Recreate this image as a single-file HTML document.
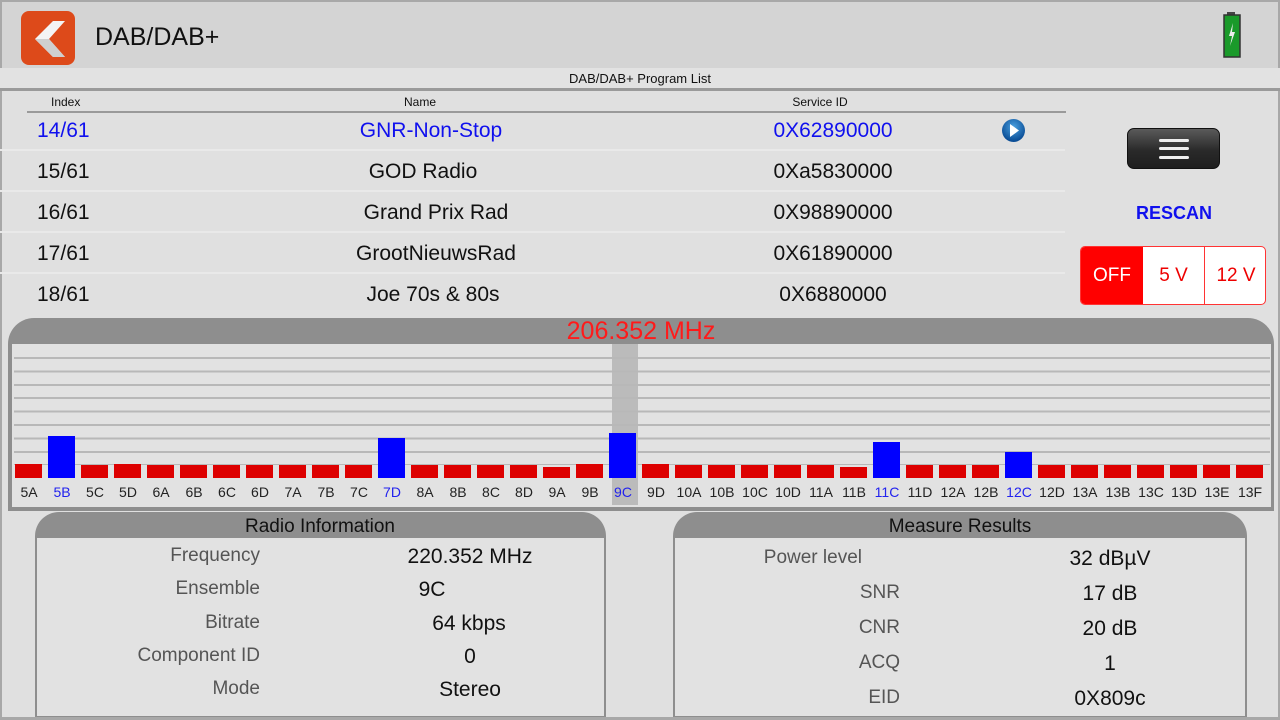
<!DOCTYPE html>
<html><head><meta charset="utf-8"><style>
*{margin:0;padding:0;box-sizing:border-box}
body{width:1280px;height:720px;overflow:hidden;background:#e0e0e0;font-family:"Liberation Sans",sans-serif;position:relative;color:#111}
.a{position:absolute;white-space:nowrap}
.c{transform:translateX(-50%)}
.row{position:absolute;left:0;width:1065px;height:41px;border-bottom:2px solid #e9e9e9;font-size:21px}
.row span{position:absolute;top:9px}
.lbl{position:absolute;text-align:right;color:#555;font-size:19px}
.val{position:absolute;font-size:21px;color:#111;transform:translateX(-50%)}
.slot{width:33px;position:relative;height:100%}
.bar{position:absolute;left:1px;width:27px;bottom:27px;background:#dd0000}
.bar.b{background:#0000ff}
.lab{position:absolute;left:15px;transform:translateX(-50%);bottom:5px;font-size:14px;color:#222}
.lab.b{color:#2222ee}
</style></head><body>
<div class="a" style="left:0;top:0;width:1280px;height:68px;background:#d4d4d4;border-top:2px solid #a8a8a8"></div>
<div class="a" style="left:0;top:0;width:2px;height:720px;background:#a8a8a8"></div>
<div class="a" style="left:1278px;top:0;width:2px;height:720px;background:#a8a8a8"></div>
<div class="a" style="left:21px;top:11px;width:54px;height:54px;background:#dd4a1a;border-radius:8px"></div>
<svg class="a" style="left:21px;top:11px" width="54" height="54"><path d="M32 10 L44 10 L28 28 L44 46 L32 46 L14 28 Z" fill="#f4f4f4"/><path d="M14 28 L28 28 L44 46 L32 46 Z" fill="#cfcfcf"/></svg>
<div class="a" style="left:95px;top:23px;font-size:25px;color:#111">DAB/DAB+</div>
<svg class="a" style="left:1222px;top:11px" width="22" height="48"><rect x="5" y="1" width="8" height="4" fill="#444"/><rect x="2" y="4" width="16" height="42" fill="#1a9a2a" stroke="#333" stroke-width="1.5"/><path d="M11 12 L7 25 L10 25 L8 35 L13 21 L10 21 Z" fill="#eee"/></svg>
<div class="a" style="left:0;top:68px;width:1280px;height:20px;background:#e2e2e2"></div>
<div class="a c" style="left:640px;top:71px;font-size:13px">DAB/DAB+ Program List</div>
<div class="a" style="left:0;top:88px;width:1280px;height:3px;background:#9a9a9a"></div>
<div class="a" style="left:51px;top:95px;font-size:12px">Index</div>
<div class="a c" style="left:420px;top:95px;font-size:12px">Name</div>
<div class="a c" style="left:820px;top:95px;font-size:12px">Service ID</div>
<div class="a" style="left:27px;top:111px;width:1039px;height:2px;background:#9a9a9a"></div>
<div class="row" style="top:110px;color:#1010ee"><span style="left:37px">14/61</span><span class="c" style="left:431px">GNR-Non-Stop</span><span class="c" style="left:833px">0X62890000</span></div>
<div class="row" style="top:151px"><span style="left:37px">15/61</span><span class="c" style="left:423px">GOD Radio</span><span class="c" style="left:833px">0Xa5830000</span></div>
<div class="row" style="top:192px"><span style="left:37px">16/61</span><span class="c" style="left:436px">Grand Prix Rad</span><span class="c" style="left:833px">0X98890000</span></div>
<div class="row" style="top:233px"><span style="left:37px">17/61</span><span class="c" style="left:436px">GrootNieuwsRad</span><span class="c" style="left:833px">0X61890000</span></div>
<div class="row" style="top:274px;border:none"><span style="left:37px">18/61</span><span class="c" style="left:433px">Joe 70s &amp; 80s</span><span class="c" style="left:833px">0X6880000</span></div>
<svg class="a" style="left:1001px;top:118px" width="25" height="25"><defs><radialGradient id="g" cx="50%" cy="35%" r="60%"><stop offset="0" stop-color="#4aa0e0"/><stop offset="1" stop-color="#0b4e96"/></radialGradient></defs><circle cx="12.5" cy="12.5" r="11.5" fill="url(#g)"/><path d="M9 6 L18 12.5 L9 19 Z" fill="#fff"/></svg>
<div class="a" style="left:1127px;top:128px;width:93px;height:41px;border-radius:7px;background:linear-gradient(#5a5a5a,#2a2a2a 55%,#1e1e1e);border:1px solid #111"></div>
<div class="a" style="left:1159px;top:139px;width:30px;height:3px;background:#eee;border-radius:2px"></div>
<div class="a" style="left:1159px;top:147px;width:30px;height:3px;background:#eee;border-radius:2px"></div>
<div class="a" style="left:1159px;top:156px;width:30px;height:3px;background:#eee;border-radius:2px"></div>
<div class="a c" style="left:1174px;top:203px;font-size:18px;font-weight:bold;color:#1010ee">RESCAN</div>
<div class="a" style="left:1080px;top:246px;width:186px;height:59px;border:1.5px solid #f33;border-radius:5px;background:#fff;overflow:hidden;font-size:19px;color:#e00">
<div class="a" style="left:0;top:0;width:62px;height:59px;background:#ff0000;color:#fff;text-align:center;line-height:57px">OFF</div>
<div class="a" style="left:62px;top:0;width:62px;height:59px;text-align:center;line-height:57px;border-right:1.5px solid #f33">5 V</div>
<div class="a" style="left:124px;top:0;width:62px;height:59px;text-align:center;line-height:57px">12 V</div></div>
<!-- chart -->
<div class="a" style="left:8px;top:318px;width:1266px;height:193px;background:#8e8e8e;border-radius:26px 26px 0 0"></div>
<div class="a" style="left:12px;top:344px;width:1259px;height:163px;background:#e2e2e2"></div>
<div class="a c" style="left:641px;top:317px;font-size:25px;color:#ff1a1a">206.352 MHz</div>
<div class="a" style="left:612px;top:344px;width:26px;height:161px;background:#bbbbbb"></div>
<div class="a" style="left:14px;top:357px;width:1256px;height:108px;background:repeating-linear-gradient(#b8b8b8 0 2px,transparent 2px 13.4px)"></div>
<div class="a" style="left:14px;top:344px;width:1254px;height:161px;display:flex">
<div class="slot"><div class="bar" style="height:14px"></div><div class="lab">5A</div></div>
<div class="slot"><div class="bar b" style="height:42px"></div><div class="lab b">5B</div></div>
<div class="slot"><div class="bar" style="height:13px"></div><div class="lab">5C</div></div>
<div class="slot"><div class="bar" style="height:14px"></div><div class="lab">5D</div></div>
<div class="slot"><div class="bar" style="height:13px"></div><div class="lab">6A</div></div>
<div class="slot"><div class="bar" style="height:13px"></div><div class="lab">6B</div></div>
<div class="slot"><div class="bar" style="height:13px"></div><div class="lab">6C</div></div>
<div class="slot"><div class="bar" style="height:13px"></div><div class="lab">6D</div></div>
<div class="slot"><div class="bar" style="height:13px"></div><div class="lab">7A</div></div>
<div class="slot"><div class="bar" style="height:13px"></div><div class="lab">7B</div></div>
<div class="slot"><div class="bar" style="height:13px"></div><div class="lab">7C</div></div>
<div class="slot"><div class="bar b" style="height:40px"></div><div class="lab b">7D</div></div>
<div class="slot"><div class="bar" style="height:13px"></div><div class="lab">8A</div></div>
<div class="slot"><div class="bar" style="height:13px"></div><div class="lab">8B</div></div>
<div class="slot"><div class="bar" style="height:13px"></div><div class="lab">8C</div></div>
<div class="slot"><div class="bar" style="height:13px"></div><div class="lab">8D</div></div>
<div class="slot"><div class="bar" style="height:11px"></div><div class="lab">9A</div></div>
<div class="slot"><div class="bar" style="height:14px"></div><div class="lab">9B</div></div>
<div class="slot"><div class="bar b" style="height:45px"></div><div class="lab b">9C</div></div>
<div class="slot"><div class="bar" style="height:14px"></div><div class="lab">9D</div></div>
<div class="slot"><div class="bar" style="height:13px"></div><div class="lab">10A</div></div>
<div class="slot"><div class="bar" style="height:13px"></div><div class="lab">10B</div></div>
<div class="slot"><div class="bar" style="height:13px"></div><div class="lab">10C</div></div>
<div class="slot"><div class="bar" style="height:13px"></div><div class="lab">10D</div></div>
<div class="slot"><div class="bar" style="height:13px"></div><div class="lab">11A</div></div>
<div class="slot"><div class="bar" style="height:11px"></div><div class="lab">11B</div></div>
<div class="slot"><div class="bar b" style="height:36px"></div><div class="lab b">11C</div></div>
<div class="slot"><div class="bar" style="height:13px"></div><div class="lab">11D</div></div>
<div class="slot"><div class="bar" style="height:13px"></div><div class="lab">12A</div></div>
<div class="slot"><div class="bar" style="height:13px"></div><div class="lab">12B</div></div>
<div class="slot"><div class="bar b" style="height:26px"></div><div class="lab b">12C</div></div>
<div class="slot"><div class="bar" style="height:13px"></div><div class="lab">12D</div></div>
<div class="slot"><div class="bar" style="height:13px"></div><div class="lab">13A</div></div>
<div class="slot"><div class="bar" style="height:13px"></div><div class="lab">13B</div></div>
<div class="slot"><div class="bar" style="height:13px"></div><div class="lab">13C</div></div>
<div class="slot"><div class="bar" style="height:13px"></div><div class="lab">13D</div></div>
<div class="slot"><div class="bar" style="height:13px"></div><div class="lab">13E</div></div>
<div class="slot"><div class="bar" style="height:13px"></div><div class="lab">13F</div></div>
</div>
<!-- radio info -->
<div class="a" style="left:35px;top:512px;width:571px;height:206px;background:#8e8e8e;border-radius:24px 24px 0 0"></div>
<div class="a" style="left:37px;top:538px;width:567px;height:178px;background:#e2e2e2"></div>
<div class="a c" style="left:320px;top:516px;font-size:19px">Radio Information</div>
<div class="lbl" style="left:60px;width:200px;top:545px">Frequency</div>
<div class="lbl" style="left:60px;width:200px;top:578px">Ensemble</div>
<div class="lbl" style="left:60px;width:200px;top:612px">Bitrate</div>
<div class="lbl" style="left:60px;width:200px;top:645px">Component ID</div>
<div class="lbl" style="left:60px;width:200px;top:678px">Mode</div>
<div class="val" style="left:470px;top:545px">220.352 MHz</div>
<div class="val" style="left:432px;top:578px">9C</div>
<div class="val" style="left:469px;top:612px">64 kbps</div>
<div class="val" style="left:470px;top:645px">0</div>
<div class="val" style="left:470px;top:678px">Stereo</div>
<!-- measure -->
<div class="a" style="left:673px;top:512px;width:574px;height:206px;background:#8e8e8e;border-radius:24px 24px 0 0"></div>
<div class="a" style="left:675px;top:538px;width:570px;height:178px;background:#e2e2e2"></div>
<div class="a c" style="left:960px;top:516px;font-size:19px">Measure Results</div>
<div class="lbl" style="left:662px;width:200px;top:547px">Power level</div>
<div class="lbl" style="left:662px;width:238px;top:582px">SNR</div>
<div class="lbl" style="left:662px;width:238px;top:617px">CNR</div>
<div class="lbl" style="left:662px;width:238px;top:652px">ACQ</div>
<div class="lbl" style="left:662px;width:238px;top:687px">EID</div>
<div class="val" style="left:1110px;top:547px">32 dBµV</div>
<div class="val" style="left:1110px;top:582px">17 dB</div>
<div class="val" style="left:1110px;top:617px">20 dB</div>
<div class="val" style="left:1110px;top:652px">1</div>
<div class="val" style="left:1110px;top:687px">0X809c</div>
<div class="a" style="left:0;top:717px;width:1280px;height:3px;background:#a8a8a8"></div>
</body></html>
